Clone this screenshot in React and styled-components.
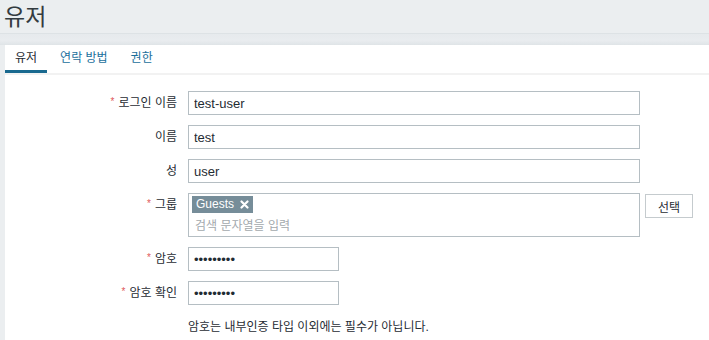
import styled, { createGlobalStyle } from "styled-components";

const GlobalStyles = createGlobalStyle`
  body {
    margin: 0;
    background-color: #ebeef0;
    font-family: "Liberation Sans", Arial, "Noto Sans CJK KR", sans-serif;
    font-size: 12px;
    color: #1f2c33;
  }
`;

const Header = styled.div`
  height: 33px;
  padding-left: 4px;
  display: flex;
  align-items: center;
  border-bottom: 1px solid #dde2e5;
`;

const Title = styled.h1`
  margin: 0;
  font-size: 23px;
  font-weight: normal;
  color: #333b40;
  line-height: 30px;
`;

const Band = styled.div`
  height: 11px;
  background: linear-gradient(#e6eaed, #e9ecef 60%, #dfe4e7);
`;

const Panel = styled.div`
  margin-left: 5px;
  background-color: #ffffff;
  min-height: 300px;
`;

const TabBar = styled.ul`
  list-style: none;
  margin: 0;
  padding: 0;
  display: flex;
  height: 28px;
  border-bottom: 2px solid #f2f2f2;
`;

const Tab = styled.li`
  padding: 0 10px;
  line-height: 26px;
  font-size: 12px;
  color: ${(p) => (p.$active ? "#1f2c33" : "#1b6f9c")};
  border-bottom: 3px solid ${(p) => (p.$active ? "#19698f" : "transparent")};
  margin-right: 3px;
`;

const Form = styled.div`
  padding-top: 16px;
  display: flex;
  flex-direction: column;
  gap: 10px;
`;

const Row = styled.div`
  display: flex;
  align-items: flex-start;
  gap: 11px;
`;

const Label = styled.label`
  width: 172px;
  height: 24px;
  text-align: right;
  line-height: 24px;
  flex-shrink: 0;
  color: #1f2c33;
`;

const Asterisk = styled.span`
  color: #e05a5a;
  font-size: 10px;
  margin-right: 4px;
  position: relative;
  top: -2px;
`;

const Input = styled.input`
  box-sizing: border-box;
  display: block;
  width: ${(p) => p.$width || 452}px;
  height: 24px;
  border: 1px solid #b5bec3;
  padding: 0 5px;
  font-family: "Liberation Sans", Arial, sans-serif;
  font-size: 13px;
  color: #1f2c33;
  outline: none;
  background: #fff;
`;

const MultiSelect = styled.div`
  box-sizing: border-box;
  width: 452px;
  height: 44px;
  border: 1px solid #b5bec3;
  padding: 2px 3px;
  display: flex;
  flex-direction: column;
  align-items: flex-start;
  gap: 3px;
`;

const Chip = styled.span`
  display: inline-flex;
  align-items: center;
  gap: 6px;
  height: 17px;
  padding: 0 4px;
  background-color: #768d99;
  color: #ffffff;
  font-size: 12px;
  line-height: 17px;
`;

const Placeholder = styled.span`
  padding-left: 3px;
  color: #a3a9ad;
  line-height: 20px;
`;

const Button = styled.button`
  box-sizing: border-box;
  width: 48px;
  height: 24px;
  margin-left: -6px;
  margin-top: 1px;
  background: #ffffff;
  border: 1px solid #c5cbce;
  font-family: "Liberation Sans", Arial, "Noto Sans CJK KR", sans-serif;
  font-size: 12px;
  color: #1f2c33;
  padding: 0;
`;

const Help = styled.div`
  height: 24px;
  line-height: 24px;
  color: #1f2c33;
`;

function Field({ label, required, children }) {
  return (
    <Row>
      <Label>
        {required && <Asterisk>*</Asterisk>}
        {label}
      </Label>
      {children}
    </Row>
  );
}

function App() {
  return (
    <>
      <GlobalStyles />
      <Header>
        <Title>유저</Title>
      </Header>
      <Band />
      <Panel>
        <TabBar>
          <Tab $active>유저</Tab>
          <Tab>연락 방법</Tab>
          <Tab>권한</Tab>
        </TabBar>
        <Form>
          <Field label="로그인 이름" required>
            <Input defaultValue="test-user" />
          </Field>
          <Field label="이름">
            <Input defaultValue="test" />
          </Field>
          <Field label="성">
            <Input defaultValue="user" />
          </Field>
          <Field label="그룹" required>
            <MultiSelect>
              <Chip>
                Guests
                <svg width="9" height="9" viewBox="0 0 9 9">
                  <path d="M1.5 1.5 L7.5 7.5 M7.5 1.5 L1.5 7.5" stroke="#fff" strokeWidth="2.2" strokeLinecap="round" />
                </svg>
              </Chip>
              <Placeholder>검색 문자열을 입력</Placeholder>
            </MultiSelect>
            <Button>선택</Button>
          </Field>
          <Field label="암호" required>
            <Input type="password" $width={151} defaultValue="123456789" />
          </Field>
          <Field label="암호 확인" required>
            <Input type="password" $width={151} defaultValue="123456789" />
          </Field>
          <Field label="">
            <Help>암호는 내부인증 타입 이외에는 필수가 아닙니다.</Help>
          </Field>
        </Form>
      </Panel>
    </>
  );
}

export default App;
